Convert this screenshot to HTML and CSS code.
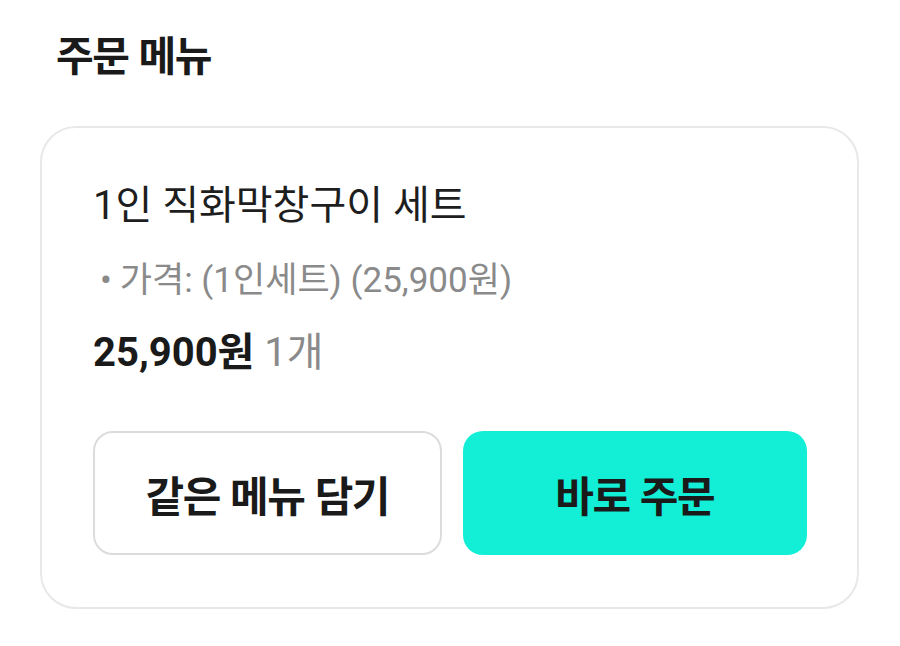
FILE: index.html
```html
<!DOCTYPE html>
<html lang="ko">
  <head>
    <meta charset="UTF-8" />
    <meta name="viewport" content="width=device-width, initial-scale=1.0" />
    <link rel="stylesheet" href="styles.css">
    <title>주문 메뉴</title>
  </head>
  <body>
    <main class="page">
      <h1 class="title">주문 메뉴</h1>

      <div class="card">
        <p class="item-name">1인 직화막창구이 세트</p>
        <p class="item-option"><span class="dot">•</span>가격: (1인세트) (25,900원)</p>
        <p class="item-price">25,900원 <span class="qty">1개</span></p>

        <div class="actions">
          <button class="btn btn-add">같은 메뉴 담기</button>
          <button class="btn btn-order">바로 주문</button>
        </div>
      </div>
    </main>
  </body>
</html>
```

FILE: styles.css
```css
* {
  padding: 0;
  margin: 0;
  box-sizing: border-box;
}

body {
  background-color: #fff;
  font-family: Roboto, "Noto Sans CJK KR", sans-serif;
  color: #1c1c1c;
}

.page {
  padding: 25px 41px 0 40px;
}

.title {
  font-family: "Noto Sans CJK KR", sans-serif;
  font-size: 41px;
  font-weight: 700;
  letter-spacing: -1.5px;
  line-height: 56px;
  margin-left: 16px;
  color: #1a1a1a;
}

.card {
  margin-top: 45px;
  width: 819px;
  border: 2px solid #e8e8e8;
  border-radius: 36px;
  padding: 52px 50px 52px 51px;
}

.item-name {
  font-size: 40px;
  line-height: 52px;
  color: #1e1e1e;
}

.item-option {
  margin-top: 27px;
  padding-left: 7px;
  font-size: 35px;
  line-height: 44px;
  color: #8a8a8a;
}

.dot {
  margin-right: 8px;
}

.item-price {
  margin-top: 27px;
  font-size: 40px;
  line-height: 46px;
  font-weight: 700;
  color: #1a1a1a;
}

.qty {
  font-weight: 400;
  color: #8a8a8a;
}

.actions {
  margin-top: 55px;
  display: flex;
  gap: 21px;
}

.btn {
  flex: 1;
  height: 124px;
  border-radius: 20px;
  font-family: "Noto Sans CJK KR", sans-serif;
  font-size: 42px;
  font-weight: 700;
  letter-spacing: -1.5px;
  color: #1a1a1a;
}

.btn-add {
  background-color: #fff;
  border: 2px solid #dcdcdc;
}

.btn-order {
  background-color: #12efd6;
  border: none;
}
```
